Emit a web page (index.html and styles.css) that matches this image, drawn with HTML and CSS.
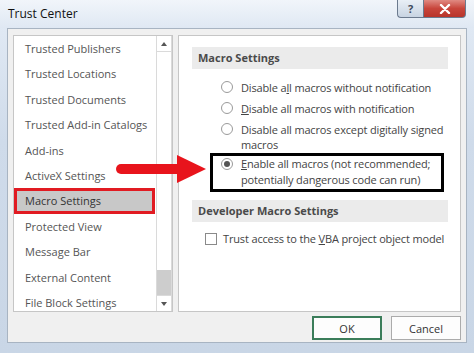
FILE: index.html
```html
<!DOCTYPE html>
<html lang="en">
<head>
    <meta charset="UTF-8">
    <meta name="viewport" content="width=device-width, initial-scale=1.0">
    <title>Trust Center</title>
    <link rel="stylesheet" href="styles.css">
</head>
<body>
    <div class="window">
        <div class="titlebar">
            <span class="title">Trust Center</span>
            <div class="controls">
                <span class="btn-help">?</span>
                <span class="btn-close">
                    <svg width="12" height="10" viewBox="0 0 12 10">
                        <path d="M2 1 L10 9 M10 1 L2 9" stroke="#fff" stroke-width="2.4" stroke-linecap="round"/>
                    </svg>
                </span>
            </div>
        </div>

        <div class="dialog">
            <div class="panes">
                <div class="nav">
                    <ul class="nav-list">
                        <li>Trusted Publishers</li>
                        <li>Trusted Locations</li>
                        <li>Trusted Documents</li>
                        <li>Trusted Add-in Catalogs</li>
                        <li>Add-ins</li>
                        <li>ActiveX Settings</li>
                        <li class="selected">Macro Settings</li>
                        <li>Protected View</li>
                        <li>Message Bar</li>
                        <li>External Content</li>
                        <li>File Block Settings</li>
                    </ul>
                    <div class="scrollbar">
                        <div class="scroll-btn up"></div>
                        <div class="track"><div class="thumb"></div></div>
                        <div class="scroll-btn down"></div>
                    </div>
                </div>

                <div class="content">
                    <div class="section-head">Macro Settings</div>
                    <div class="option first"><span class="radio"></span><span>Disable a<u>l</u>l macros without notification</span></div>
                    <div class="option"><span class="radio"></span><span><u>D</u>isable all macros with notification</span></div>
                    <div class="option"><span class="radio"></span><span>Disable all macros except digitally signed<br>macros</span></div>
                    <div class="highlight">
                        <div class="option"><span class="radio checked"></span><span><u>E</u>nable all macros (not recommended;<br>potentially dangerous code can run)</span></div>
                    </div>
                    <div class="section-head dev">Developer Macro Settings</div>
                    <div class="check-row"><span class="checkbox"></span><span>Trust access to the <u>V</u>BA project object model</span></div>
                </div>
            </div>

            <div class="buttons">
                <button class="btn default">OK</button>
                <button class="btn">Cancel</button>
            </div>
        </div>

        <!-- red pointer arrow drawn over the dialog -->
        <svg class="arrow" width="98" height="34" viewBox="0 0 98 34">
            <rect x="4" y="12" width="66" height="10" rx="5" fill="#e8141c"/>
            <polygon points="65,3 94,17 65,31" fill="#e8141c"/>
        </svg>
    </div>
</body>
</html>
```

FILE: styles.css
```css
body {
    margin: 0;
    padding: 0;
    font-family: "Open Sans", "Noto Sans", sans-serif;
    font-size: 11px;
    color: #444;
    background-color: #d6e0ec;
}

.window {
    position: relative;
    width: 474px;
    height: 353px;
    overflow: hidden;
    background: linear-gradient(to bottom, #e4ecf6, #cfdbea 40%, #c9d6e6);
}

.titlebar {
    height: 28px;
    display: flex;
    justify-content: space-between;
    align-items: flex-start;
    background: linear-gradient(to bottom, #f1f5fa, #dfe8f3);
}

.title {
    margin: 5px 0 0 8px;
    font-size: 12px;
    color: #111;
}

.controls {
    display: flex;
    margin-right: 8px;
}

.btn-help, .btn-close {
    height: 18px;
    display: flex;
    align-items: center;
    justify-content: center;
    box-sizing: border-box;
    border: 1px solid #6b7a8e;
    border-top: none;
}

.btn-help {
    width: 26px;
    border-right: none;
    border-radius: 0 0 0 4px;
    background: linear-gradient(to bottom, #e9eff6, #c8d4e2);
    color: #3d4a5c;
    font-weight: bold;
    font-size: 11px;
}

.btn-close {
    width: 43px;
    border-radius: 0 0 4px 0;
    background: linear-gradient(to bottom, #e08a82, #c8453b 50%, #b8342a);
}

.dialog {
    width: 460px;
    height: 315px;
    margin-left: 7px;
    box-sizing: border-box;
    border: 1px solid #a8b4c2;
    background-color: #f0f0f0;
    padding: 6px 5px 0 5px;
}

.panes {
    display: flex;
    gap: 5px;
    height: 277px;
}

.nav {
    width: 160px;
    box-sizing: border-box;
    border: 1px solid #c6c6c6;
    background-color: #fff;
    display: flex;
}

.nav-list {
    list-style: none;
    margin: 0;
    padding: 0;
    width: 142px;
    overflow: hidden;
}

.nav-list li {
    height: 25.4px;
    line-height: 25.4px;
    padding-left: 11px;
    color: #555;
    white-space: nowrap;
}

.nav-list li.selected {
    box-sizing: border-box;
    width: 141px;
    border: 3px solid #e11b22;
    padding-left: 8px;
    line-height: 19.4px;
    background-color: #c8c8c8;
    color: #333;
}

.scrollbar {
    width: 16px;
    display: flex;
    flex-direction: column;
    border-left: 1px solid #dadada;
    border-right: 1px solid #dadada;
    box-sizing: border-box;
}

.scroll-btn {
    height: 15px;
    position: relative;
}

.scroll-btn.up {
    border-bottom: 1px solid #dadada;
}

.scroll-btn.down {
    border-top: 1px solid #dadada;
}

.scroll-btn::after {
    content: "";
    position: absolute;
    left: 4px;
    top: 6px;
    border-left: 3.5px solid transparent;
    border-right: 3.5px solid transparent;
}

.scroll-btn.up::after {
    border-bottom: 4px solid #555;
}

.scroll-btn.down::after {
    border-top: 4px solid #555;
}

.track {
    flex: 1;
    display: flex;
    flex-direction: column;
    justify-content: flex-end;
}

.thumb {
    height: 25px;
    background-color: #cdcdcd;
}

.content {
    width: 283px;
    box-sizing: border-box;
    border: 1px solid #c6c6c6;
    background-color: #fff;
    padding: 11px 12px 0 13px;
    letter-spacing: -0.15px;
}

.section-head {
    height: 22px;
    line-height: 22px;
    padding-left: 6px;
    background-color: #ebebeb;
    font-weight: bold;
    color: #4a4a4a;
    letter-spacing: 0;
}

.option {
    display: flex;
    align-items: flex-start;
    gap: 8px;
    margin-left: 29px;
    margin-top: 6px;
    line-height: 15px;
    color: #444;
    white-space: nowrap;
}

.option.first {
    margin-top: 11px;
}

.radio {
    flex: none;
    width: 12px;
    height: 12px;
    margin-top: 1px;
    box-sizing: border-box;
    border: 1px solid #9a9a9a;
    border-radius: 50%;
    background-color: #fff;
    display: flex;
    align-items: center;
    justify-content: center;
}

.radio.checked::after {
    content: "";
    width: 6px;
    height: 6px;
    border-radius: 50%;
    background-color: #555;
}

.highlight {
    width: 234px;
    margin: 1px 0 0 18px;
    box-sizing: border-box;
    border: 3px solid #000;
    padding: 0 0 1px 0;
}

.highlight .option {
    margin: 0 0 0 8px;
    line-height: 16px;
}

.highlight .radio {
    margin-top: 2px;
}

.section-head.dev {
    margin-top: 8px;
}

.check-row {
    display: flex;
    align-items: center;
    gap: 6px;
    margin: 9px 0 0 13px;
    line-height: 15px;
    white-space: nowrap;
}

.checkbox {
    flex: none;
    width: 12px;
    height: 12px;
    box-sizing: border-box;
    border: 1px solid #8a8a8a;
    background-color: #fff;
}

.buttons {
    display: flex;
    justify-content: flex-end;
    gap: 9px;
    margin-top: 4px;
}

.btn {
    width: 70px;
    height: 24px;
    font-family: inherit;
    font-size: 11px;
    color: #333;
    background-color: #fdfdfd;
    border: 1px solid #ababab;
    padding: 0;
}

.btn.default {
    border: 2px solid #3b7d5a;
}

.arrow {
    position: absolute;
    left: 112px;
    top: 152px;
}
```
